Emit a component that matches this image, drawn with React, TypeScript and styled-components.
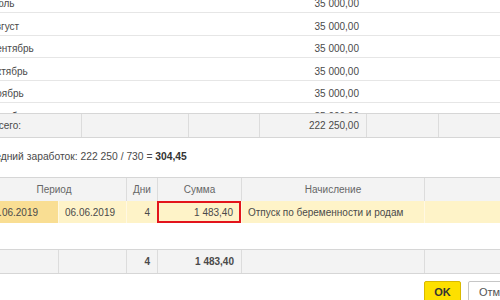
import React from "react";
import styled, { createGlobalStyle } from "styled-components";

const GlobalStyle = createGlobalStyle`
    html, body {
        margin: 0;
        padding: 0;
        background: #fff;
        overflow: hidden;
    }
    body {
        width: 500px;
        height: 300px;
        font-family: "Liberation Sans", Arial, sans-serif;
        font-size: 10px;
        color: #4a4a4a;
    }
`;

const Page = styled.div`
    width: 540px;
    margin-left: -18px;
    display: flex;
    flex-direction: column;
`;

const TOP_COLUMNS = "95px 107px 71px 107px 72px 1fr";
const BOTTOM_COLUMNS = "76px 68px 31px 84px 183px 1fr";

const TopTable = styled.div`
    margin-left: 4px;
    display: flex;
    flex-direction: column;
`;

const TopBody = styled.div`
    height: 113px;
    overflow: hidden;
`;

const TopRows = styled.div`
    margin-top: -9.5px;
    display: flex;
    flex-direction: column;
`;

const MonthRow = styled.div`
    display: grid;
    grid-template-columns: ${TOP_COLUMNS};
    height: 22.5px;
    box-sizing: border-box;
    padding-top: 5px;
    border-bottom: 1px solid #e6e6e6;
    align-items: center;
`;

const Cell = styled.div<{ $align?: "left" | "right" | "center"; $bold?: boolean }>`
    padding: 0 7px 0 6px;
    text-align: ${p => p.$align || "left"};
    font-weight: ${p => (p.$bold ? "bold" : "normal")};
    white-space: nowrap;
    overflow: hidden;
`;

const MonthCell = styled(Cell)`
    padding-left: 3px;
`;

const FooterRow = styled.div<{ $columns: string }>`
    display: grid;
    grid-template-columns: ${p => p.$columns};
    height: 25px;
    box-sizing: border-box;
    background: #f3f3f3;
    border-top: 1px solid #d6d6d6;
    border-bottom: 1px solid #d6d6d6;
`;

const FooterCell = styled(Cell)<{ $first?: boolean }>`
    display: flex;
    align-items: center;
    justify-content: ${p => (p.$align === "right" ? "flex-end" : "flex-start")};
    border-left: ${p => (p.$first ? "none" : "1px solid #dcdcdc")};
`;

const Summary = styled.div`
    margin-top: 12px;
    height: 14px;
    line-height: 14px;
    font-size: 10.3px;
    color: #4a4a4a;

    b {
        color: #333;
    }
`;

const BottomTable = styled.div`
    margin-top: 13px;
    display: flex;
    flex-direction: column;
`;

const HeaderRow = styled.div`
    display: grid;
    grid-template-columns: ${BOTTOM_COLUMNS};
    height: 24px;
    box-sizing: border-box;
    background: #f3f3f3;
    border-top: 1px solid #d6d6d6;
    color: #666;
`;

const HeaderCell = styled.div<{ $span?: number; $first?: boolean }>`
    grid-column: span ${p => p.$span || 1};
    display: flex;
    align-items: center;
    justify-content: center;
    border-left: ${p => (p.$first ? "none" : "1px solid #dcdcdc")};
`;

const DataRow = styled.div`
    display: grid;
    grid-template-columns: ${BOTTOM_COLUMNS};
    height: 22px;
`;

const DataCell = styled(Cell)<{ $current?: boolean; $marked?: boolean; $first?: boolean }>`
    display: flex;
    align-items: center;
    justify-content: ${p => (p.$align === "right" ? "flex-end" : "flex-start")};
    box-sizing: border-box;
    background: ${p => (p.$current ? "#f9de93" : "#fef3c8")};
    border-left: ${p => (p.$first ? "none" : "1px solid #fff8e2")};
    ${p => p.$marked && "border: 2px solid #e3141b; padding-right: 6px;"}
`;

const EmptyBody = styled.div`
    height: 26px;
`;

const ButtonBar = styled.div`
    display: flex;
    gap: 7px;
    margin-top: 7px;
    padding-left: 442px;
`;

const Button = styled.button<{ $primary?: boolean }>`
    height: 22px;
    min-width: ${p => (p.$primary ? "37px" : "70px")};
    padding: 0 ${p => (p.$primary ? "0" : "10px")};
    box-sizing: border-box;
    border-radius: 2px;
    font-family: "Liberation Sans", Arial, sans-serif;
    font-size: 11px;
    font-weight: ${p => (p.$primary ? "bold" : "normal")};
    text-align: ${p => (p.$primary ? "center" : "left")};
    color: ${p => (p.$primary ? "#333" : "#555")};
    background: ${p => (p.$primary ? "#fde000" : "#fff")};
    border: 1px solid ${p => (p.$primary ? "#d9b900" : "#c6c6c6")};
`;

const months = ["Июль", "Август", "Сентябрь", "Октябрь", "Ноябрь", "Декабрь"];

export default function App() {
    return (
        <>
            <GlobalStyle />
            <Page>
                <TopTable>
                    <TopBody>
                        <TopRows>
                            {months.map(month => (
                                <MonthRow key={month}>
                                    <MonthCell>{month}</MonthCell>
                                    <Cell />
                                    <Cell />
                                    <Cell $align="right">35 000,00</Cell>
                                    <Cell />
                                    <Cell />
                                </MonthRow>
                            ))}
                        </TopRows>
                    </TopBody>
                    <FooterRow $columns={TOP_COLUMNS}>
                        <FooterCell $first>Всего:</FooterCell>
                        <FooterCell />
                        <FooterCell />
                        <FooterCell $align="right">222 250,00</FooterCell>
                        <FooterCell />
                        <FooterCell />
                    </FooterRow>
                </TopTable>

                <Summary>
                    Средний заработок: 222 250 / 730 = <b>304,45</b>
                </Summary>

                <BottomTable>
                    <HeaderRow>
                        <HeaderCell $span={2} $first>Период</HeaderCell>
                        <HeaderCell>Дни</HeaderCell>
                        <HeaderCell>Сумма</HeaderCell>
                        <HeaderCell>Начисление</HeaderCell>
                        <HeaderCell />
                    </HeaderRow>
                    <DataRow>
                        <DataCell $current $first>06.06.2019</DataCell>
                        <DataCell>06.06.2019</DataCell>
                        <DataCell $align="right">4</DataCell>
                        <DataCell $align="right" $marked>1 483,40</DataCell>
                        <DataCell>Отпуск по беременности и родам</DataCell>
                        <DataCell />
                    </DataRow>
                    <EmptyBody />
                    <FooterRow $columns={BOTTOM_COLUMNS}>
                        <FooterCell $first />
                        <FooterCell />
                        <FooterCell $align="right" $bold>4</FooterCell>
                        <FooterCell $align="right" $bold>1 483,40</FooterCell>
                        <FooterCell />
                        <FooterCell />
                    </FooterRow>
                </BottomTable>

                <ButtonBar>
                    <Button $primary>OK</Button>
                    <Button>Отмена</Button>
                </ButtonBar>
            </Page>
        </>
    );
}
